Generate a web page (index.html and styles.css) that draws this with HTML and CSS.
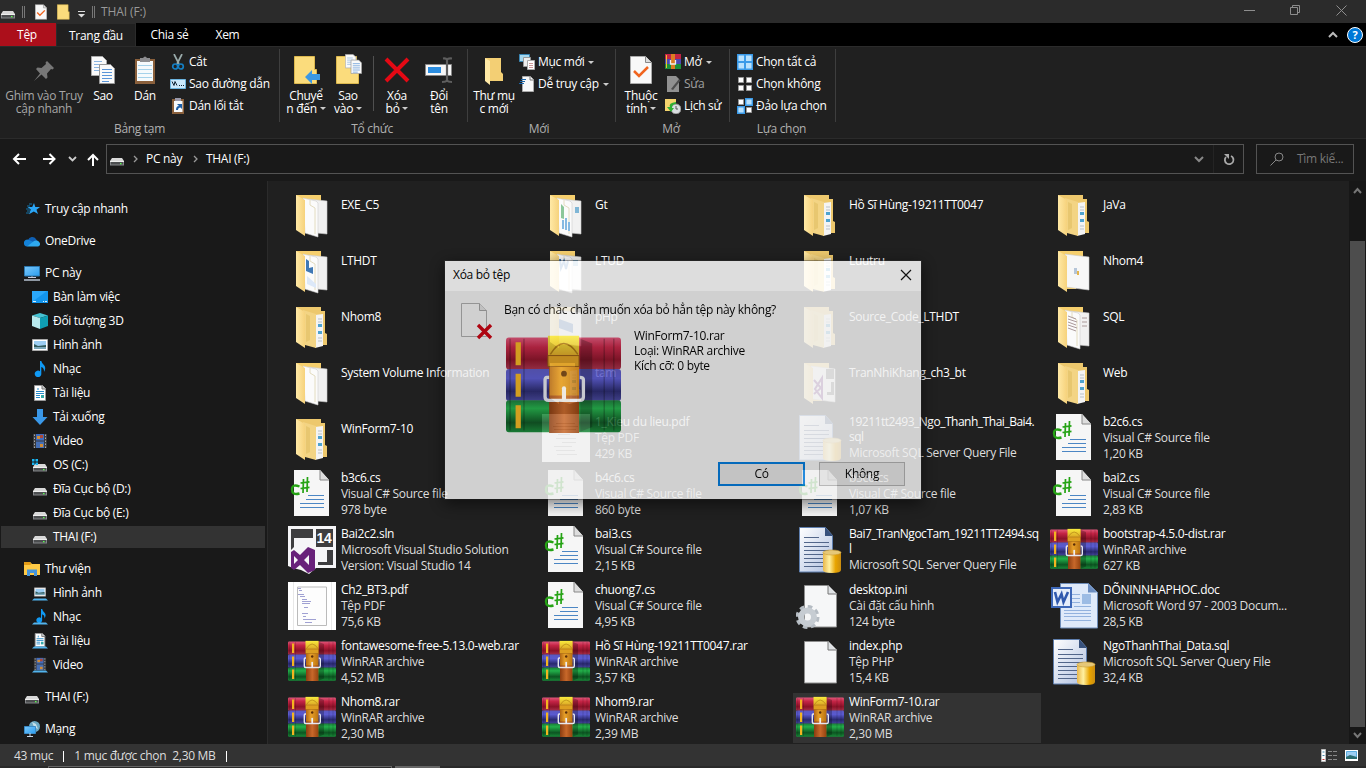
FILE: index.html
```html
<!DOCTYPE html>
<html lang="vi">
<head>
<meta charset="utf-8">
<title>THAI (F:)</title>
<link rel="stylesheet" href="styles.css">
</head>
<body>
<svg class="defs" aria-hidden="true">
<defs>
<linearGradient id="gFold" x1="0" x2="1"><stop offset="0" stop-color="#ffe9a6"/><stop offset="1" stop-color="#f6d27c"/></linearGradient>
<linearGradient id="gRed" x1="0" y1="0" x2="0" y2="1"><stop offset="0" stop-color="#e0567a"/><stop offset=".3" stop-color="#c42445"/><stop offset=".7" stop-color="#8c1228"/><stop offset="1" stop-color="#a8304a"/></linearGradient>
<linearGradient id="gBlue" x1="0" y1="0" x2="0" y2="1"><stop offset="0" stop-color="#5a58c0"/><stop offset=".3" stop-color="#5a5ad0"/><stop offset=".7" stop-color="#29296f"/><stop offset="1" stop-color="#45459b"/></linearGradient>
<linearGradient id="gGreen" x1="0" y1="0" x2="0" y2="1"><stop offset="0" stop-color="#1b7d3a"/><stop offset=".25" stop-color="#22b04a"/><stop offset=".7" stop-color="#0d5522"/><stop offset="1" stop-color="#178a38"/></linearGradient>
<linearGradient id="gStrap" x1="0" y1="0" x2="1" y2="0"><stop offset="0" stop-color="#b06514"/><stop offset=".4" stop-color="#e8a12a"/><stop offset="1" stop-color="#b8700f"/></linearGradient>
<linearGradient id="gStrap2" x1="0" y1="0" x2="1" y2="0"><stop offset="0" stop-color="#8a3c10"/><stop offset=".5" stop-color="#c8682a"/><stop offset="1" stop-color="#94420f"/></linearGradient>
<linearGradient id="gFlap" x1="0" y1="0" x2="0" y2="1"><stop offset="0" stop-color="#f9ec3e"/><stop offset="1" stop-color="#dba524"/></linearGradient>
<linearGradient id="gGold" x1="0" x2="1"><stop offset="0" stop-color="#e8b64a"/><stop offset=".35" stop-color="#fff0a0"/><stop offset=".7" stop-color="#e8a400"/><stop offset="1" stop-color="#c98c10"/></linearGradient>
<linearGradient id="gSql" x1="0" y1="0" x2="1" y2="1"><stop offset="0" stop-color="#fff"/><stop offset="1" stop-color="#aebfe0"/></linearGradient>
<linearGradient id="gScreen" x1="0" y1="0" x2="1" y2="1"><stop offset="0" stop-color="#7cc8fa"/><stop offset="1" stop-color="#2a9df0"/></linearGradient>
</defs>
<symbol id="f-doc" viewBox="0 0 48 48"><path d="M8 5h25v8l-7 30H13z" fill="#f6cf6d"/><path d="M20 9l19 2v33l-10-1z" fill="#f1f1f1" stroke="#c9c9c9" stroke-width=".6"/><path d="M15 8l13 3 2 2v34L17 43z" fill="#fbfbfb" stroke="#cfcfcf" stroke-width=".6"/><path d="M22 10v5l5 3v26" fill="none" stroke="#e3dcc0"/><path d="M8 5l9 5v36L8 40z" fill="url(#gFold)"/></symbol>
<symbol id="f-one" viewBox="0 0 48 48"><path d="M8 5h25v8l-7 30H13z" fill="#f6cf6d"/><path d="M15 8l24 3v33l-23-3z" fill="#f7f7f7" stroke="#c9c9c9" stroke-width=".6"/><path d="M8 5l9 5v36L8 40z" fill="url(#gFold)"/></symbol>
<symbol id="f-sub" viewBox="0 0 48 48"><path d="M8 5h25v4h4v22l2 1v11H13z" fill="#edc86d"/><path d="M27 13l8-1v32l-8 2z" fill="#f4f4f4"/><path d="M30 17h4M30 20h4M30 36h4M30 39h4" stroke="#b9c2c9"/><path d="M30 22h4v3h-4zM30 29h4v3h-4z" fill="#4ea3cf"/><path d="M15 8l13 4v34L17 43z" fill="#f3d484"/><path d="M18 12l4 2v24l-4 2z" fill="#e3c268" opacity=".7"/><path d="M8 5l9 5v36L8 40z" fill="url(#gFold)"/></symbol>
<symbol id="cs" viewBox="0 0 48 48"><path d="M6 0h26l9 10v36H6z" fill="#f6f6f6"/><path d="M32 0v10h9" fill="#ddd" stroke="#888"/><path d="M20 25.500h16M18 29.500h18M12 33.500h24M12 37.500h24" stroke="#4b86c4"/><path d="M11.500 16.500q-7.500-3-7.500 3t7.500 4" fill="none" stroke="#25a314" stroke-width="2.400"/><path d="M15.500 9l-.5 14M19.500 7l-.5 15M12.500 13l9-1.200M12.500 18.500l9-1.200" stroke="#25a314" stroke-width="1.700"/></symbol>
<symbol id="page" viewBox="0 0 48 48"><path d="M8.500 3.500h24l8 8v33.500h-32z" fill="#f6f7f8" stroke="#8e8e8e"/><path d="M32 3.500v8.500h8" fill="#dfe2e5" stroke="#777"/></symbol>
<symbol id="ini" viewBox="0 0 48 48"><use href="#page"/><circle cx="11.500" cy="35" r="10" fill="none" stroke="#b5bcc3" stroke-width="4" stroke-dasharray="4.400 3.450"/><circle cx="11.500" cy="35" r="6.500" fill="none" stroke="#c6ccd2" stroke-width="6"/></symbol>
<symbol id="sql" viewBox="0 0 48 48"><path d="M3.500 1.500h26l7 8V46h-33z" fill="url(#gSql)" stroke="#5f7fae"/><path d="M29 1v9h8z" fill="#37517c"/><path d="M8 11.500h15M8 16.500h25M8 20.500h25M8 24.500h25M8 28.500h21M8 32.500h19M8 36.500h19M8 40.500h19" stroke="#52668a" stroke-width="1.200"/><path d="M27 26h18v18q0 3-9 3t-9-3z" fill="url(#gGold)"/><ellipse cx="36" cy="26.500" rx="9" ry="2.500" fill="#e6c878" stroke="#c89a30" stroke-width=".6"/></symbol>
<symbol id="word" viewBox="0 0 48 48"><path d="M10.500 1.500h28l9 9V46h-37z" fill="#dfeafa" stroke="#6d8cb8"/><path d="M38 1.500v9h9z" fill="#6b8dc0"/><path d="M22 12.500h8M22 16.500h8M22 20.500h8M14 28.500h27M14 31.500h27M14 34.500h27M14 38.500h27M24 24.500h17" stroke="#93b2de"/><path d="M32 12h9v10h-9z" fill="#9dbce4"/><path d="M1 5h21v21H1z" fill="#3e68b8"/><path d="M3 7h17v17H3z" fill="#e6eefb"/><path d="M5 10l2.500 10 4-8 2 8L18 10" fill="none" stroke="#3059ae" stroke-width="2.600"/></symbol>
<symbol id="sln" viewBox="0 0 48 48"><path d="M0 0h48v42H28l-7 6-8-4-8-2-5-2z" fill="#f5f5f7"/><path d="M3 3h22v9H3zM3 12h3v9l-3 3zM28 3h17v18H28zM39 24h6v15H30v-3h9z" fill="#3d3d3f"/><path d="M20 21l7 3v20l-7 3-8-8-6 5-3-2V26l3-2 6 5zM21 29l-5 5 5 5zM6 30v8l4-4z" fill="#68217a" fill-rule="evenodd"/></symbol>
<symbol id="pdf" viewBox="0 0 48 48"><path d="M0 0h48v48H0z" fill="#fff"/><path d="M5.500 0v48M43.500 0v48" stroke="#e8e8e8"/><path d="M9.500 5h29v38.500h-29z" fill="#fdfdfd" stroke="#bbb"/><path d="M10 6.500h3M11 8.500h3M10 12.500h6M12 14.500h5M14 17.500h5M14 19.500h9M14 21.500h8M16 25.500h4M14 31.500h6M15 34.500h3M15 37.500h13M17 40.500h7" stroke="#8889c8" stroke-width=".8"/></symbol>
<symbol id="pdf2" viewBox="0 0 48 48"><path d="M0 0h48v48H0z" fill="#fff"/><path d="M14 9.500h19M11 12.500h25M12 15.500h22M16 20.500h12M14 24.500h20M20 28.500h14M12 32.500h18M14 36.500h19M15 40.500h20" stroke="#888" stroke-width=".7"/></symbol>
<symbol id="rar" viewBox="0 2.500 48 40.500" preserveAspectRatio="none"><rect x="0" y="3.500" width="48" height="13.200" rx="1.200" fill="url(#gRed)"/><rect x="0" y="16.500" width="48" height="13.200" rx="1.200" fill="url(#gBlue)"/><rect x="0" y="29.500" width="48" height="13.200" rx="1.200" fill="url(#gGreen)"/><path d="M4 5.500h2.200v9.500H4zM4 18.500h2.200v9.500H4zM4 31.500h2.200v9.500H4z" fill="#f3b520"/><path d="M1.700 4v38M7.500 4v38M41 4v38M45 4v38" stroke="#000" stroke-opacity=".25" stroke-width=".6"/><path d="M31 4v38.500l5-2V6z" fill="#000" opacity=".25"/><path d="M18 3h12.500v27H18z" fill="url(#gStrap)"/><path d="M18 27.500h12.500V43H18z" fill="url(#gStrap2)"/><path d="M17.500 2.800h13v8.500h-13z" fill="url(#gFlap)"/><path d="M17.500 11h13v4.500h-13z" fill="#dd9e20" stroke="#8f5510" stroke-width=".4"/><path d="M18.500 10.500q5.500-9 11.500 0" fill="none" stroke="#a97511" stroke-width=".6"/><circle cx="24.200" cy="18.500" r="1.200" fill="#5a2d08"/><path d="M18 20h-1q-.6 0-.7 1v7q0 1.500 1.500 1.500h13q1.500 0 1.500-1.500v-7q0-1-1.500-1" fill="none" stroke="#e6e7ee" stroke-width="1.400"/><path d="M24.200 24.500v4.200" stroke="#eeeef4" stroke-width="1.700" stroke-linecap="round"/></symbol>
<symbol id="drive" viewBox="0 0 16 16"><path d="M3 7h10l2 3H1z" fill="#d8d8d8"/><path d="M1 10h14v4.500H1z" fill="#85878a"/><path d="M2 11h12v2.500H2z" fill="#4c4e50"/><path d="M1 10h14v1H1z" fill="#eee"/><path d="M11 12h1.500v1.300H11z" fill="#5aff4e"/></symbol>
<symbol id="winc" viewBox="0 0 16 16"><use href="#drive"/><path d="M0 2h2.500v2.500H0zM3.500 2H6v2.500H3.500zM0 5.500h2.500V8H0zM3.500 5.500H6V8H3.500z" fill="#18b4f1"/></symbol>
<symbol id="star" viewBox="0 0 16 16"><path d="M10 2l1.300 4H16l-3.500 2.700L14 13l-4.200-2.500L5 13.200l1.800-4.600L3.500 6h4.700z" fill="#2aa5f5"/><path d="M5 3h3M3 5h3M2 8h4M3 10h3M2 12h3" stroke="#1372a8"/></symbol>
<symbol id="cloud" viewBox="0 0 16 16"><path d="M4 7a4.500 4.500 0 0 1 8-1l1 2-6 3-4-2z" fill="#0f60b4"/><path d="M0 10a3.200 3.200 0 0 1 5-3l7 3-9 3.500A3 3 0 0 1 0 10z" fill="#1482d8"/><path d="M3 13.500l7-5.500a4 4 0 0 1 5.500 1.500 2.500 2.500 0 0 1-1.500 4z" fill="#2eaaf0"/></symbol>
<symbol id="pc" viewBox="0 0 16 16"><path d="M.5 1.500h15v9.500H.5z" fill="url(#gScreen)" stroke="#2c78b0"/><path d="M7 11.500h2v1.500H7z" fill="#9ab"/><path d="M4 12.500h8" stroke="#ccd"/><path d="M0 15h16" stroke="#b7c3d2" stroke-width="1.500"/></symbol>
<symbol id="desk" viewBox="0 0 16 16"><path d="M0 2h16v12H0z" fill="#1295ee"/><path d="M0 13L15 2H0z" fill="#2aa8fb"/><path d="M1 12.500h3M11 12.500h1M13 12.500h2" stroke="#d8f0ff"/></symbol>
<symbol id="cube" viewBox="0 0 16 16"><path d="M8 0l8 2.500L8 5 0 2.500z" fill="#46c3d3"/><path d="M0 2.500L8 5v11l-8-3z" fill="#b9eaee"/><path d="M16 2.500L8 5v11l8-3z" fill="#0f9fb4"/></symbol>
<symbol id="pic" viewBox="0 0 16 16"><path d="M.5 2.500h15v11H.5z" fill="#fff" stroke="#aaa"/><path d="M2 4h12v8H2z" fill="#9ccdf2"/><path d="M2 7l4 2 8-1v3H2z" fill="#305a5b"/><path d="M2 10h12v2H2z" fill="#7ba7b9"/></symbol>
<symbol id="note" viewBox="0 0 16 16"><path d="M8 0h1.300q.5 2.500 3 4.500 2 2.500-.3 6.500.4-4-2.700-5v6.500a3.300 3.300 0 1 1-1.300-2.300z" fill="#109af5"/></symbol>
<symbol id="text" viewBox="0 0 16 16"><path d="M2.500.5h8l3 3v12h-11z" fill="#fff" stroke="#999"/><path d="M10 0v4h4" fill="#ccc" stroke="#777"/><path d="M4 6.500h8M4 8.500h8M4 12.500h4M4 10.500h4M6 3v2" stroke="#268ac9"/><path d="M9 10h3v3H9z" fill="#3aa"/></symbol>
<symbol id="down" viewBox="0 0 16 16"><path d="M5 0h6v8h4.500L8 16 .5 8H5z" fill="#3a98e8"/></symbol>
<symbol id="film" viewBox="0 0 16 16"><path d="M1 1h14v14H1z" fill="#39393b"/><path d="M4 1h8v6.500H4z" fill="#3e6cc0"/><path d="M4 8.500h8V15H4z" fill="#466fb4"/><path d="M5 3h3v3H5zM8 11h3v3H8z" fill="#d08b35"/><path d="M8 2h3v3H8z" fill="#ab4a38"/><path d="M2.500 1.500V15M13.500 1.500V15" stroke="#aaa" stroke-dasharray="1.500 1.500"/></symbol>
<symbol id="lib" viewBox="0 0 16 16"><path d="M0 1h6l2 2h8v11H0z" fill="#ffca46"/><path d="M0 1h6l1.500 2L6 4H0z" fill="#e39b16"/><path d="M3 15V8.500h10V15h-3v-3H6v3z" fill="#4795da"/></symbol>
<symbol id="net" viewBox="0 0 16 16"><circle cx="10.500" cy="5.500" r="5.500" fill="#6ba8c2"/><path d="M8 1l4 2 2 5-4-2z" fill="#c6e0e8"/><path d="M.5 5.500h11v7H.5z" fill="url(#gScreen)" stroke="#3a8bc7"/><path d="M6 12v3M3 15.500h6" stroke="#c7d6e6"/></symbol>
<symbol id="scis" viewBox="0 0 16 16"><path d="M4 0l5 10M12 0L7 10" stroke="#9aa" stroke-width="1.700"/><ellipse cx="5.200" cy="12.500" rx="2.500" ry="2.500" fill="none" stroke="#157fc4" stroke-width="1.700"/><ellipse cx="10.800" cy="12.500" rx="2.500" ry="2.500" fill="none" stroke="#157fc4" stroke-width="1.700"/></symbol>
<symbol id="chk" viewBox="0 0 22 28"><path d="M.5.5h15l6 6v21H.5z" fill="#f8f8f8" stroke="#aaa"/><path d="M15.500.5v6h6" fill="#ddd" stroke="#888"/><path d="M4 15l5 5 9-9" fill="none" stroke="#f0641e" stroke-width="2.500"/></symbol>
<symbol id="copy" viewBox="0 0 24 28"><path d="M.5.5h11l4 4v15H.5z" fill="#fafafa" stroke="#aaa"/><path d="M3 5.500h8M3 8.500h9M3 11.500h9M3 14.500h9" stroke="#8ab4e0"/><path d="M8.500 8.500h11l4 4v15h-15z" fill="#fafafa" stroke="#999"/><path d="M11 13.500h10M11 16.500h10M11 19.500h10M11 22.500h10M11 25.500h7" stroke="#5a95d8"/></symbol>
<symbol id="fold" viewBox="0 0 24 28"><path d="M.5.500h20v13h2v14H.5z" fill="#fbdc7c" stroke="#dcb84e"/></symbol>
</svg>

<div class="window">
  <header class="title">
    <svg width="16" height="16"><use href="#drive"/></svg><i class="bar"></i>
    <svg class="t1" width="12" height="16"><use href="#chk"/></svg>
    <svg class="t2" width="13" height="16"><use href="#fold"/></svg>
    <svg class="t3" width="8" height="8"><path d="M0 1.500h7" stroke="#ddd"/><path d="M0 4h7L3.500 7.500z" fill="#ddd"/></svg><i class="bar"></i>
    <span class="name">THAI (F:)</span>
    <span class="wctl">
      <svg width="11" height="11"><path d="M0 5.500h11" stroke="#8e8e8e"/></svg>
      <svg width="11" height="11"><path d="M.5 2.500h7v7h-7zM2.500 2.500v-2h7v7h-2" fill="none" stroke="#8e8e8e"/></svg>
      <svg width="11" height="11"><path d="M.5.5l10 10M10.500.5l-10 10" stroke="#8e8e8e"/></svg>
    </span>
  </header>
  <nav class="tabs"><span class="file">Tệp</span><span class="on">Trang đầu</span><span class="share">Chia sẻ</span><span class="view">Xem</span>
    <span class="help"><svg width="10" height="7"><path d="M1 6l4-4 4 4" fill="none" stroke="#bbb" stroke-width="2"/></svg><b>?</b></span></nav>

  <section class="ribbon">
    <div class="group g1"><div class="tools">
      <div class="big pin"><svg width="22" height="22"><path d="M14 1l7 7-1.500 1.500-1.500-.5-4 4.500.5 4L13 19l-4.500-4.500L1 21l6-7.500L3 9l1.500-1.500 4 .5L13 4l-.5-1.500z" fill="#777"/></svg><span>Ghim vào Truy<br>cập nhanh</span></div>
      <div class="big copy"><svg width="24" height="28"><use href="#copy"/></svg><span>Sao</span></div>
      <div class="big paste"><svg width="20" height="28"><path d="M0 3h20v25H0z" fill="#8a603c"/><path d="M2 5h16v20H2z" fill="#f6fafc"/><path d="M3 9.500h14M3 13.500h14M3 17.500h14M3 21.500h14" stroke="#a6d2ea"/><path d="M5 2h3q2-3 4 0h3v4H5z" fill="#8d8d90"/></svg><span>Dán</span></div>
      <div class="list"><p><svg width="16" height="16"><use href="#scis"/></svg>Cắt</p><p><svg width="16" height="16"><path d="M.5 3.500h15v9H.5z" fill="#cbe8fb" stroke="#6cb4e0"/><path d="M2 5.500l2 4 1-4 2 4M9 9.500h1M11 9.500h1M13 9.500h1" fill="none" stroke="#123"/></svg>Sao đường dẫn</p><p><svg width="16" height="16"><path d="M2 1h12v15H2z" fill="#8a603c"/><path d="M4 3h8.500v11H4z" fill="#f8fafc"/><path d="M5 0h6v3H5z" fill="#99a"/><path d="M6 12q0-4 3-4L7 6h5v5l-1.500-1.500Q8 9.500 8 12z" fill="#1d5ea6"/></svg>Dán lối tắt</p></div>
    </div><footer>Bảng tạm</footer></div>
    <div class="group g2"><div class="tools">
      <div class="big"><svg width="24" height="28"><use href="#fold"/><path d="M11 21l7-7v4h8v6h-8v4z" fill="#3b98e4"/></svg><span>Chuyể<br>n đến <i class="ar"></i></span></div>
      <div class="big"><svg width="24" height="28"><use href="#fold"/><g transform="translate(9 -2)"><use href="#copy" width="17" height="20"/></g></svg><span>Sao<br>vào <i class="ar"></i></span></div>
      <i class="line"></i>
      <div class="big"><svg width="24" height="28"><path d="M1 3l22 22M23 3L1 25" stroke="#e50914" stroke-width="4"/></svg><span>Xóa<br>bỏ <i class="ar"></i></span></div>
      <div class="big"><svg width="28" height="28"><path d="M.5 8.500h26v11H.5z" fill="#f7f7f7" stroke="#888"/><path d="M3 11h13v6H3z" fill="#2b8de0"/><path d="M18 2.500q3-.5 4 1 1-1.500 5-1M22 3v22M17 26q4 0 5-1.500 1 1.500 5 1.500" fill="none" stroke="#5e5e5e" stroke-width="2.200"/></svg><span>Đổi<br>tên</span></div>
    </div><footer>Tổ chức</footer></div>
    <div class="group g3"><div class="tools">
      <div class="big wide"><svg width="20" height="28"><path d="M1 2h16v14l2 2v7H5z" fill="#f3cf74"/><path d="M1 2l5 3v24l-5-4z" fill="#ffe9a6"/></svg><span>Thư mụ<br>c mới</span></div>
      <div class="list"><p><svg width="16" height="16"><path d="M.5.5h10v7H.5z" fill="#a6d8ef" stroke="#3a86b4"/><path d="M4.500 3.500h7v9h-7z" fill="#eee" stroke="#999"/><path d="M8.500 6.500h7v9h-7z" fill="#fff" stroke="#aaa"/><path d="M10 9.500h4M10 11.500h4M10 13.500h4" stroke="#c99"/></svg>Mục mới <i class="ar"></i></p><p><svg width="16" height="16"><path d="M3.500.5h8l3 3v12h-11z" fill="#f8f8f8" stroke="#aaa"/><path d="M11 .5v3.500h3.500" fill="none" stroke="#777"/><path d="M2 3.500h5M1 5.500h5M0 7.500h5" stroke="#1c65a8"/></svg>Dễ truy cập <i class="ar"></i></p></div>
    </div><footer>Mới</footer></div>
    <div class="group g4"><div class="tools">
      <div class="big wide"><svg width="22" height="28"><use href="#chk"/></svg><span>Thuộc<br>tính <i class="ar"></i></span></div>
      <div class="list"><p><svg width="16" height="16"><path d="M0 0h16v5H0z" fill="#c42445"/><path d="M0 5h16v5H0z" fill="#4b49b4"/><path d="M0 10h16v5H0z" fill="#1a8f3c"/><path d="M1.500 1v13" stroke="#edc22c"/><path d="M6 0h4v15H6z" fill="#dd7d22"/><path d="M5.500 6v4h5V6" fill="none" stroke="#eee" stroke-width="1.300"/></svg>Mở <i class="ar"></i></p><p class="dim"><svg width="16" height="16"><path d="M2 0h9l3 3v13H2z" fill="#919191"/><path d="M6 13L14 3l1.500 1.500L8 14z" fill="#4e4e4e"/></svg>Sửa</p><p><svg width="16" height="16"><path d="M0 1h11v12H0z" fill="#f5d36d"/><circle cx="11" cy="11" r="5" fill="#d9dde0" stroke="#888"/><path d="M11 8v3h2" fill="none" stroke="#555"/><path d="M11 4Q3 5 5 9H2l4 5 3-4H7q0-4 4-4z" fill="#2fae34"/></svg>Lịch sử</p></div>
    </div><footer>Mở</footer></div>
    <div class="group g5"><div class="tools"><div class="list">
      <p><svg width="16" height="16"><path d="M0 0h16v16H0z" fill="#3a9ae8"/><path d="M1.500 1.500h5.500v5.500H1.500zM9 1.500h5.500v5.500H9zM1.500 9h5.500v5.500H1.500zM9 9h5.500v5.500H9z" fill="#b9e1fd"/></svg>Chọn tất cả</p>
      <p><svg width="16" height="16"><path d="M1.500 1.500h5v5h-5zM9.500 1.500h5v5h-5zM1.500 9.500h5v5h-5zM9.500 9.500h5v5h-5z" fill="#fff" stroke="#999"/></svg>Chọn không</p>
      <p><svg width="16" height="16"><path d="M1.500 1.500h5v5h-5zM9.500 9.500h5v5h-5z" fill="#fff" stroke="#999"/><path d="M8.700.7h6.600v6.600H8.700zM.7 8.700h6.600v6.600H.7z" fill="#b9e1fd" stroke="#3a9ae8" stroke-width="1.400"/></svg>Đảo lựa chọn</p>
    </div></div><footer>Lựa chọn</footer></div>
  </section>

  <section class="address">
    <svg width="90" height="16"><path d="M26 8H14.500M19 3l-5 5 5 5" fill="none" stroke="#fff" stroke-width="2"/><path d="M43 8h11.500M49.500 3l5 5-5 5" fill="none" stroke="#fff" stroke-width="2"/><path d="M69 6l3.500 3.500L76 6" fill="none" stroke="#ccc" stroke-width="1.800"/></svg>
    <svg class="up" width="12" height="14"><path d="M6 13V2M1 7l5-5 5 5" fill="none" stroke="#fff" stroke-width="2"/></svg>
    <div class="path"><svg width="16" height="16"><use href="#drive"/></svg><svg class="sep" width="5" height="8"><path d="M1 1l3 3-3 3" fill="none" stroke="#999" stroke-width="1.300"/></svg><span class="crumb">PC này</span><svg class="sep" width="5" height="8"><path d="M1 1l3 3-3 3" fill="none" stroke="#999" stroke-width="1.300"/></svg><span>THAI (F:)</span>
      <svg class="dd" width="10" height="7"><path d="M1 1l4 4 4-4" fill="none" stroke="#888" stroke-width="2"/></svg><i class="rule"></i><svg class="re" width="12" height="13"><path d="M3 4a4.300 4.300 0 1 0 5-1" fill="none" stroke="#aaa" stroke-width="1.800"/><path d="M1 1h5v5z" fill="#aaa"/></svg></div>
    <div class="search"><svg width="14" height="14"><circle cx="9" cy="5" r="4" fill="none" stroke="#888"/><path d="M6 8l-5.500 5.500" stroke="#888"/></svg><span>Tìm kiế...</span></div>
  </section>

  <main>
    <aside>
      <p><svg><use href="#star"/></svg>Truy cập nhanh</p>
      <p class="root"><svg><use href="#cloud"/></svg>OneDrive</p>
      <p class="root"><svg><use href="#pc"/></svg>PC này</p>
      <p class="sub"><svg><use href="#desk"/></svg>Bàn làm việc</p>
      <p class="sub"><svg><use href="#cube"/></svg>Đối tượng 3D</p>
      <p class="sub"><svg><use href="#pic"/></svg>Hình ảnh</p>
      <p class="sub"><svg><use href="#note"/></svg>Nhạc</p>
      <p class="sub"><svg><use href="#text"/></svg>Tài liệu</p>
      <p class="sub"><svg><use href="#down"/></svg>Tải xuống</p>
      <p class="sub"><svg><use href="#film"/></svg>Video</p>
      <p class="sub"><svg><use href="#winc"/></svg>OS (C:)</p>
      <p class="sub"><svg><use href="#drive"/></svg>Đĩa Cục bộ (D:)</p>
      <p class="sub"><svg><use href="#drive"/></svg>Đĩa Cục bộ (E:)</p>
      <p class="sub cur"><svg><use href="#drive"/></svg>THAI (F:)</p>
      <p class="root"><svg><use href="#lib"/></svg>Thư viện</p>
      <p class="sub"><svg><use href="#pic" x="2" y="1" width="12" height="12"/><path d="M0 15.500l2-2h12l2 2z" fill="#52b4ee"/></svg>Hình ảnh</p>
      <p class="sub"><svg><use href="#note" x="2" y="0" width="14" height="14"/><path d="M0 15.500l2-2h12l2 2z" fill="#52b4ee"/></svg>Nhạc</p>
      <p class="sub"><svg><use href="#text" x="1" y="0" width="14" height="14"/><path d="M0 15.500l2-2h12l2 2z" fill="#52b4ee"/></svg>Tài liệu</p>
      <p class="sub"><svg><use href="#film" x="1" y="0" width="14" height="14"/><path d="M0 15.500l2-2h12l2 2z" fill="#52b4ee"/></svg>Video</p>
      <p class="root"><svg><use href="#drive"/></svg>THAI (F:)</p>
      <p class="root"><svg><use href="#net"/></svg>Mạng</p>
    </aside>
    <div class="files">
      <div class="item dir"><svg><use href="#f-doc"/></svg><div><b>EXE_C5</b></div></div>
      <div class="item dir"><svg><use href="#f-doc"/><path d="M19 14l3 3v12l-3-1z" fill="#8cc79a"/><path d="M20 30h2v9h-2zM23 28h2v12h-2zM26 32h2v9h-2z" fill="#86b9e2"/><path d="M33 17h4v6h-4z" fill="#7fb6d6"/></svg><div><b>Gt</b></div></div>
      <div class="item dir"><svg><use href="#f-sub"/></svg><div><b>Hồ Sĩ Hùng-19211TT0047</b></div></div>
      <div class="item dir"><svg><use href="#f-sub"/></svg><div><b>JaVa</b></div></div>
      <div class="item dir"><svg><use href="#f-doc"/><path d="M18 13l3 2v7l4-1v7l-7-3z" fill="#3f78b5"/><path d="M19 30l9 8v4l-9-4z" fill="#dce8f8"/></svg><div><b>LTHDT</b></div></div>
      <div class="item dir"><svg><use href="#f-doc"/><path d="M18 13l1 9 3-7 2 8 2-8" fill="none" stroke="#3f78b5" stroke-width="2"/><path d="M31 14h5v6h-5z" fill="#86b2d0"/></svg><div><b>LTUD</b></div></div>
      <div class="item dir"><svg><use href="#f-sub"/></svg><div><b>Luutru</b></div></div>
      <div class="item dir"><svg><use href="#f-one"/><path d="M24 22h3v6h-3z" fill="#b5c5d8"/><path d="M27 25h2v4h-2z" fill="#e5b54c"/></svg><div><b>Nhom4</b></div></div>
      <div class="item dir"><svg><use href="#f-sub"/></svg><div><b>Nhom8</b></div></div>
      <div class="item dir"><svg><use href="#f-one"/><path d="M17 17l14 5v9l-14-5z" fill="#3d72b6"/></svg><div><b>pHp</b></div></div>
      <div class="item dir"><svg><use href="#f-sub"/></svg><div><b>Source_Code_LTHDT</b></div></div>
      <div class="item dir"><svg><use href="#f-doc"/><path d="M18 14l8 3M18 17l9 3M18 20l8 3M18 23l9 3M18 26l8 3M32 16h5M32 20h5M32 24h5" stroke="#a99"/></svg><div><b>SQL</b></div></div>
      <div class="item dir"><svg><use href="#f-doc"/></svg><div><b>System Volume Information</b></div></div>
      <div class="item dir"><svg><use href="#f-sub"/></svg><div><b>tam</b></div></div>
      <div class="item dir"><svg><use href="#f-one"/><path d="M30 11h8v10h-8zM35 24h3v13h-7v-3h4z" fill="#666"/><path d="M18 22l7 8-7 6M26 20v20l-7-9z" fill="none" stroke="#68217a" stroke-width="2"/></svg><div><b>TranNhiKhang_ch3_bt</b></div></div>
      <div class="item dir"><svg><use href="#f-sub"/></svg><div><b>Web</b></div></div>
      <div class="item dir"><svg><use href="#f-sub"/></svg><div><b>WinForm7-10</b></div></div>
      <div class="item"><svg><use href="#pdf2"/></svg><div><b>1_Kieu du lieu.pdf</b>Tệp PDF<br>429 KB</div></div>
      <div class="item"><svg><use href="#sql"/></svg><div><b class="two">19211tt2493_Ngo_Thanh_Thai_Bai4.<br>sql</b>Microsoft SQL Server Query File</div></div>
      <div class="item"><svg><use href="#cs"/></svg><div><b>b2c6.cs</b>Visual C# Source file<br>1,20 KB</div></div>
      <div class="item"><svg><use href="#cs"/></svg><div><b>b3c6.cs</b>Visual C# Source file<br>978 byte</div></div>
      <div class="item"><svg><use href="#cs"/></svg><div><b>b4c6.cs</b>Visual C# Source file<br>860 byte</div></div>
      <div class="item"><svg><use href="#cs"/></svg><div><b>b5c6.cs</b>Visual C# Source file<br>1,07 KB</div></div>
      <div class="item"><svg><use href="#cs"/></svg><div><b>bai2.cs</b>Visual C# Source file<br>2,83 KB</div></div>
      <div class="item"><svg><use href="#sln"/><text x="28.500" y="17" class="fourteen">14</text></svg><div><b>Bai2c2.sln</b>Microsoft Visual Studio Solution<br>Version: Visual Studio 14</div></div>
      <div class="item"><svg><use href="#cs"/></svg><div><b>bai3.cs</b>Visual C# Source file<br>2,15 KB</div></div>
      <div class="item"><svg><use href="#sql"/></svg><div><b class="two">Bai7_TranNgocTam_19211TT2494.sq<br>l</b>Microsoft SQL Server Query File</div></div>
      <div class="item"><svg><use href="#rar" y="2.500" width="48" height="40.500"/></svg><div><b>bootstrap-4.5.0-dist.rar</b>WinRAR archive<br>627 KB</div></div>
      <div class="item"><svg><use href="#pdf"/></svg><div><b>Ch2_BT3.pdf</b>Tệp PDF<br>75,6 KB</div></div>
      <div class="item"><svg><use href="#cs"/></svg><div><b>chuong7.cs</b>Visual C# Source file<br>4,95 KB</div></div>
      <div class="item"><svg><use href="#ini"/></svg><div><b>desktop.ini</b>Cài đặt cấu hình<br>124 byte</div></div>
      <div class="item"><svg><use href="#word"/></svg><div><b>DÕNINNHAPHOC.doc</b>Microsoft Word 97 - 2003 Docum...<br>28,5 KB</div></div>
      <div class="item"><svg><use href="#rar" y="2.500" width="48" height="40.500"/></svg><div><b>fontawesome-free-5.13.0-web.rar</b>WinRAR archive<br>4,52 MB</div></div>
      <div class="item"><svg><use href="#rar" y="2.500" width="48" height="40.500"/></svg><div><b>Hồ Sĩ Hùng-19211TT0047.rar</b>WinRAR archive<br>3,57 KB</div></div>
      <div class="item"><svg><use href="#page"/></svg><div><b>index.php</b>Tệp PHP<br>15,4 KB</div></div>
      <div class="item"><svg><use href="#sql"/></svg><div><b>NgoThanhThai_Data.sql</b>Microsoft SQL Server Query File<br>32,4 KB</div></div>
      <div class="item"><svg><use href="#rar" y="2.500" width="48" height="40.500"/></svg><div><b>Nhom8.rar</b>WinRAR archive<br>2,30 MB</div></div>
      <div class="item"><svg><use href="#rar" y="2.500" width="48" height="40.500"/></svg><div><b>Nhom9.rar</b>WinRAR archive<br>2,39 MB</div></div>
      <div class="item sel"><svg><use href="#rar" y="2.500" width="48" height="40.500"/></svg><div><b>WinForm7-10.rar</b>WinRAR archive<br>2,30 MB</div></div>
    </div>
    <div class="scroll"><svg width="9" height="7"><path d="M1 6l3.500-4L8 6" fill="none" stroke="#777" stroke-width="2"/></svg><i></i><svg width="9" height="7"><path d="M1 1l3.500 4L8 1" fill="none" stroke="#777" stroke-width="2"/></svg></div>
  </main>
  <footer class="status"><div><span>43 mục</span><i></i><span>1 mục được chọn</span><span class="mb">2,30 MB</span><i></i>
    <svg width="38" height="14"><path d="M.5.5h4v12h-4z" fill="#fff" stroke="#bbb"/><path d="M1.500 3h2" stroke="#48a"/><path d="M1.500 6.500h2" stroke="#48a"/><path d="M1.500 10.500h2" stroke="#c33"/><path d="M7 2.500h4M12 2.500h4M7 6.500h4M12 6.500h4M7 10.500h4M12 10.500h4" stroke="#888"/><path d="M24 1h13v11H24z" fill="#fff"/><path d="M25.500 2.500h10v7h-10z" fill="#9ccdf2" stroke="#5bace0"/><path d="M25 8l4-2 7 2v2H25z" fill="#2a6c70"/></svg></div>
    <div class="edge"><i></i><i></i></div>
  </footer>

  <div class="dialog">
    <header><span>Xóa bỏ tệp</span><svg width="12" height="12"><path d="M1 1l10 10M11 1L1 11" stroke="#111" stroke-width="1.200"/></svg></header>
    <div class="body">
      <svg class="warn" width="36" height="40"><path d="M1.500.5h18l7 7v26h-25z" fill="#f0f0f0" stroke="#a9a9a9"/><path d="M19.500.5v7h7" fill="#ddd" stroke="#a0a0a0"/><path d="M18 22l13 13M31 22L18 35" stroke="#c8000f" stroke-width="3.400"/></svg>
      <div class="msg"><p>Bạn có chắc chắn muốn xóa bỏ hẳn tệp này không?</p>
        <div class="info"><svg width="115" height="98"><use href="#rar" width="115" height="98"/></svg><span>WinForm7-10.rar<br>Loại: WinRAR archive<br>Kích cỡ: 0 byte</span></div>
      </div>
    </div>
    <div class="btns"><button class="yes">Có</button><button>Không</button></div>
  </div>
</div>
</body>
</html>
```
FILE: styles.css
```css
* { box-sizing: border-box; }
body { margin: 0; background: #191919; overflow: hidden; }
p { margin: 0; }
svg { flex: none; display: block; }
.defs { position: absolute; width: 0; height: 0; }
.window { position: relative; width: 1366px; height: 768px; display: flex; flex-direction: column; font: 12px/16px "Open Sans", "Noto Sans", sans-serif; letter-spacing: -.3px; color: #fff; white-space: nowrap; overflow: hidden; }

.title { height: 23px; background: #2b2b2b; display: flex; align-items: center; padding-top: 1px; color: #999; }
.bar { width: 3px; height: 12px; border: 1px solid #777; border-width: 0 1px; margin-left: 6px; }
.t1 { margin-left: 10px; }
.t2 { margin-left: 10px; }
.t3 { margin: 3px 0 0 8px; }
.title .bar + .name { margin-left: 6px; letter-spacing: -.1px; }
.wctl { margin-left: auto; display: flex; gap: 35px; padding: 0 19px 3px 0; }

.tabs { height: 23px; background: #000; display: flex; line-height: 24px; text-align: center; }
.tabs > span { width: 57px; }
.tabs .file { background: #ac0f1b; width: 56px; padding-right: 2px; }
.tabs .on { width: 80px; background: #202020; border: 1px solid #2b2b2b; border-bottom: 0; line-height: 23px; }
.tabs .share { width: 67px; }
.tabs .view { width: 49px; }
.tabs .help { margin-left: auto; width: 38px; display: flex; align-items: center; gap: 9px; }
.help b { width: 16px; height: 16px; flex: none; border-radius: 50%; background: #0078d7; border: 1px solid #fff; font-size: 11px; line-height: 14px; }

.ribbon { height: 93px; background: #202020; border: solid #2b2b2b; border-width: 1px 0; display: flex; }
.group { display: flex; flex-direction: column; border-right: 1px solid #3e3e3e; margin: 2px 0; height: 73px; }
.group footer { text-align: center; color: #b0b0b0; line-height: 16px; }
.tools { height: 72px; flex: none; display: flex; }
.g1 { width: 280px; } .g2 { width: 188px; padding-left: 5px; } .g3 { width: 148px; padding-left: 3px; } .g4 { width: 114px; padding-left: 2px; } .g5 { width: 106px; }
.g2 footer, .g3 footer { margin-left: -8px; } .g4 footer { margin-left: -5px; } .g5 footer { margin-left: -2px; }
.big { width: 42px; padding-top: 6px; display: flex; flex-direction: column; align-items: center; text-align: center; line-height: 13px; }
.big svg { height: 28px; margin: 1px 0 5px; overflow: visible; }
.big span { width: max-content; }
.wide { width: 46px; }
.pin { width: 88px; color: #a6a6a6; }
.big.pin svg { height: 22px; margin: 5px 0 7px; }
.copy { width: 30px; }
.paste { width: 50px; margin-left: 2px; }
.line { width: 1px; height: 55px; background: #505050; margin: 7px 2px 0 4px; }
.list { line-height: 22px; padding-top: 2px; }
.list p { display: flex; align-items: center; gap: 3px; height: 22px; }
.g3 .list, .g4 .list { padding-left: 1px; } .g3 .list { padding-left: 2px; } .g5 .list { padding-left: 7px; }
.dim { color: #a0a0a0; }
.ar { display: inline-block; border: 3px solid transparent; border-top-color: #ccc; border-bottom: 0; vertical-align: 3px; }
.list .ar { margin-left: 1px; }

.address { height: 42px; display: flex; align-items: center; padding: 0 12px 2px 0; }
.up { margin: 2px 7px 0 -3px; }
.path { width: 1138px; height: 30px; border: 1px solid #535353; display: flex; align-items: center; padding-left: 2px; }
.sep { margin: 0 8px; }
.crumb { width: 39px; }
.dd { margin-left: auto; }
.rule { width: 1px; height: 28px; background: #242424; margin: 0 9px; }
.re { margin-right: 8px; }
.search { width: 98px; height: 30px; margin-left: 12px; border: 1px solid #535353; display: flex; align-items: center; gap: 13px; padding-left: 13px; color: #777; }

main { height: 563px; display: flex; }
aside { width: 268px; padding-top: 16px; border-right: 1px solid #2b2b2b; }
aside p { display: flex; align-items: center; gap: 5px; height: 24px; padding-left: 24px; }
aside svg { width: 16px; height: 16px; }
aside .root { margin-top: 8px; }
aside .sub { padding-left: 32px; }
aside .cur { background: #333; height: 22px; margin: 1px 2px 0 1px; padding-left: 31px; }
aside .cur + .root { margin-top: 9px; }
.files { width: 1081px; background: #202020; display: grid; grid-template-columns: repeat(4, 248px); grid-auto-rows: 50px; gap: 6px; padding: 8px 0 0 17px; }
.item { display: flex; gap: 5px; padding: 1px 0 0 3px; color: #dedede; }
.item svg { width: 48px; height: 48px; overflow: visible; }
.item b { font-weight: normal; display: block; color: #fff; }
.item .two { line-height: 15px; padding-bottom: 1px; letter-spacing: -.48px; }
.dir > div { padding-top: 7px; }
.sel { background: #333; }
.fourteen { font: bold 14px "Liberation Sans", sans-serif; fill: #fff; }
.scroll { width: 17px; background: #171717; display: flex; flex-direction: column; align-items: center; padding: 6px 0 5px; }
.scroll i { width: 15px; height: 486px; background: #4d4d4d; margin-top: 47px; }
.scroll svg:last-child { margin-top: 5px; }

.status { height: 24px; background: #333; color: #ddd; }
.status > div:first-child { height: 22px; display: flex; align-items: center; padding: 2px 7px 0 14px; }
.status div:first-child i { width: 1px; height: 11px; background: #fff; margin: 0 10px; }
.status .mb { margin-left: 6px; }
.status svg { margin-left: auto; }
.edge { height: 2px; padding-left: 48px; display: flex; gap: 3px; background: #2a2a2a; }
.edge i { width: 344px; border: 1px solid #666; border-bottom: 0; }
.edge i + i { width: 45px; background: #666; }

.dialog { position: absolute; left: 445px; top: 261px; width: 476px; height: 238px; background: #f0f0f0; opacity: .85; color: #000; display: flex; flex-direction: column; box-shadow: 0 4px 14px 1px rgba(0,0,0,.6), 0 0 0 1px rgba(60,60,60,.5); }
.dialog header { height: 30px; background: #fff; display: flex; align-items: center; justify-content: space-between; padding: 0 9px 2px 8px; }
.body { display: flex; padding: 12px 0 0 15px; height: 171px; }
.msg { padding-left: 8px; }
.msg p { line-height: 13px; }
.info { display: flex; gap: 13px; margin: 12px 0 0 2px; line-height: 15px; }
.info svg { margin: 7px 0 0; }
.btns { display: flex; justify-content: flex-end; gap: 14px; padding: 30px 16px 0 0; margin-top: -30px; }
button { width: 86px; height: 24px; font: inherit; letter-spacing: inherit; background: #e1e1e1; border: 1px solid #adadad; padding: 0; color: #000; }
.yes { width: 87px; border: 2px solid #0078d7; }
```
